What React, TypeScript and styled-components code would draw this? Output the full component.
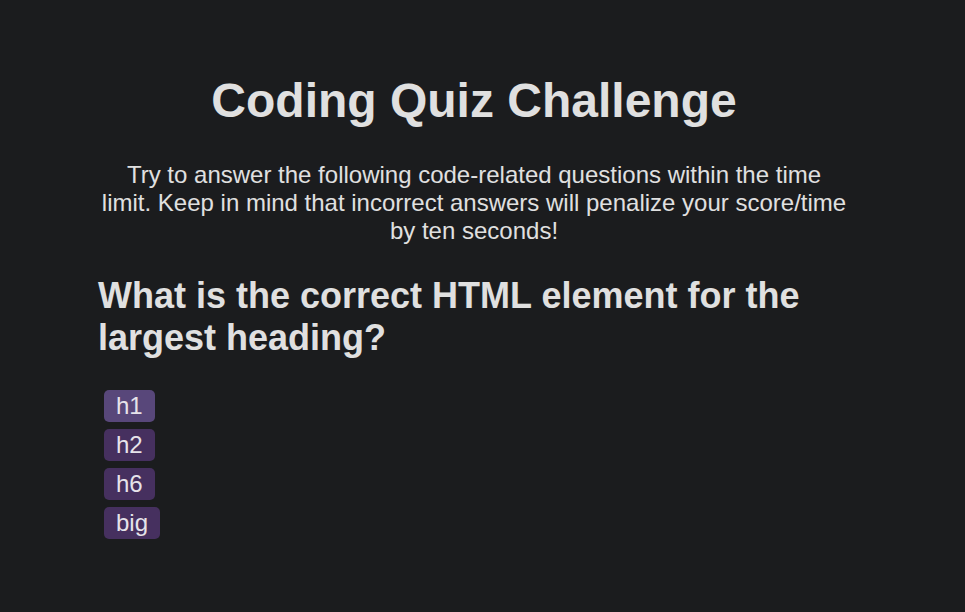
import React from 'react';
import styled, { createGlobalStyle } from 'styled-components';

const GlobalStyle = createGlobalStyle`
  html, body {
    margin: 0;
    padding: 0;
    background: #1b1c1e;
    color: #e0e0e0;
    font-family: "Liberation Sans", Arial, sans-serif;
  }

  body {
    padding-right: 17px;
  }
`;

const Page = styled.main`
  width: 752px;
  margin: 0 auto;
  padding-top: 73px;
`;

const Title = styled.h1`
  margin: 0;
  font-size: 48px;
  line-height: 55px;
  text-align: center;
`;

const Intro = styled.p`
  margin: 33px 0 0;
  padding: 0 2px;
  font-size: 24px;
  line-height: 28px;
  text-align: center;
`;

const Question = styled.h2`
  margin: 30px 0 0;
  font-size: 36px;
  line-height: 42px;
`;

const Choices = styled.ol`
  list-style: none;
  margin: 31px 0 0;
  padding: 0 0 0 6px;
  display: flex;
  flex-direction: column;
  align-items: flex-start;
  gap: 7px;
`;

const Choice = styled.button<{ $active?: boolean }>`
  border: none;
  border-radius: 5px;
  height: 32px;
  padding: 0 12px;
  background: ${(p) => (p.$active ? '#58477a' : '#46305f')};
  color: #e6e3ea;
  font-family: inherit;
  font-size: 24px;
  line-height: 32px;
  cursor: pointer;

  &:hover {
    background: #58477a;
  }
`;

const answers = ['h1', 'h2', 'h6', 'big'];

const App: React.FC = () => {
  return (
    <>
      <GlobalStyle />
      <Page>
        <Title>Coding Quiz Challenge</Title>
        <Intro>
          Try to answer the following code-related questions within the time limit. Keep in mind
          that incorrect answers will penalize your score/time by ten seconds!
        </Intro>
        <Question>What is the correct HTML element for the largest heading?</Question>
        <Choices>
          {answers.map((answer, index) => (
            <li key={answer}>
              <Choice $active={index === 0}>{answer}</Choice>
            </li>
          ))}
        </Choices>
      </Page>
    </>
  );
};

export default App;
